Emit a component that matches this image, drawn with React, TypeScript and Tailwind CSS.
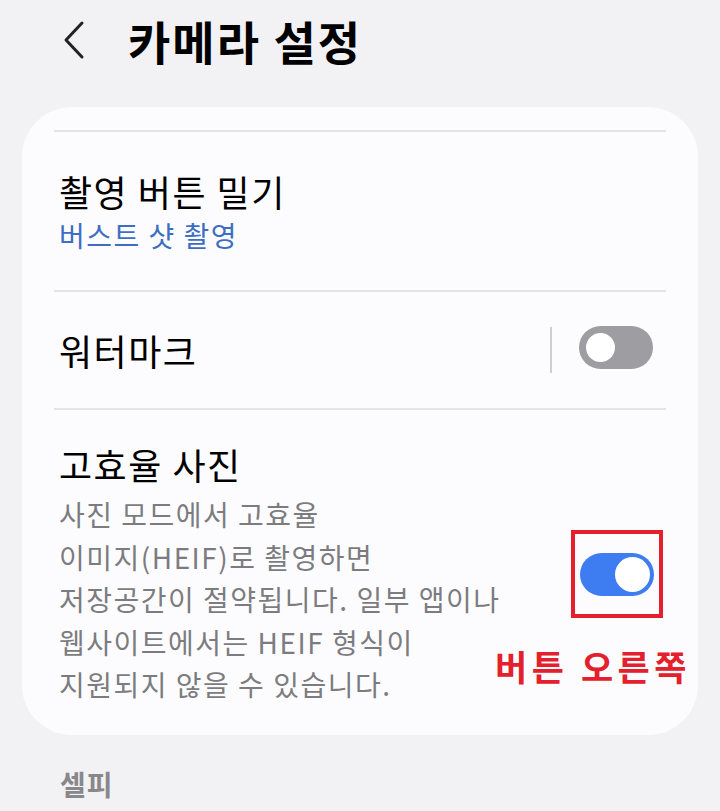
import { useState } from 'react';

const font = { fontFamily: '"Noto Sans CJK KR", "Noto Sans", sans-serif' };

// Samsung-style pill switch
function Toggle({ on, onClick }: { on: boolean; onClick?: () => void }) {
  return (
    <button
      onClick={onClick}
      className={`relative h-[43px] w-[74px] rounded-full ${on ? 'bg-[#3e7cf1]' : 'bg-[#9d9da2]'}`}
    >
      <span
        className={`absolute top-[4px] h-[35px] w-[35px] rounded-full bg-white ${
          on ? 'left-[35px]' : 'left-[4px] border-[3px] border-[#9d9da2]'
        }`}
      />
    </button>
  );
}

export default function App() {
  const [watermark, setWatermark] = useState(false);
  const [heif, setHeif] = useState(true);

  return (
    <div className="min-h-[811px] w-[720px] overflow-hidden bg-[#f2f2f4]" style={font}>
      {/* Header */}
      <div className="flex h-[80px] items-center">
        <svg className="ml-[62px] h-[40px] w-[26px]" viewBox="0 0 26 40" fill="none">
          <path d="M20 3 L4 20 L20 37" stroke="#222" strokeWidth="3" strokeLinecap="round" strokeLinejoin="round" />
        </svg>
        <h1 className="ml-[40px] text-[46px] font-bold leading-none tracking-[2px] text-black">카메라 설정</h1>
      </div>

      {/* Settings card */}
      <div className="mx-[22px] mt-[27px] h-[628px] rounded-[50px] bg-[#fcfcfe] px-[32px] pt-[23px]">
        <div className="h-[2px] bg-[#e4e4e7]" />

        <div className="flex h-[158px] flex-col justify-center pl-[5px]">
          <div className="text-[36px] leading-[48px] tracking-[1.5px] text-black">촬영 버튼 밀기</div>
          <div className="text-[28px] leading-[40px] tracking-[1.5px] text-[#3d6ec3]">버스트 샷 촬영</div>
        </div>

        <div className="h-[2px] bg-[#e4e4e7]" />

        <div className="flex h-[116px] items-center pl-[5px]">
          <div className="flex-1 text-[36px] tracking-[1.5px] text-black">워터마크</div>
          <div className="h-[46px] w-[2px] bg-[#cfcfd3]" />
          <div className="ml-[27px] mr-[13px]">
            <Toggle on={watermark} onClick={() => setWatermark(!watermark)} />
          </div>
        </div>

        <div className="h-[2px] bg-[#e4e4e7]" />

        <div className="relative flex pl-[5px] pt-[28px]">
          <div className="flex-1">
            <div className="text-[36px] leading-[52px] tracking-[1.5px] text-black">고효율 사진</div>
            <div className="mt-[3px] text-[28px] leading-[42.5px] tracking-[1.5px] text-[#7c7c80]">
              사진 모드에서 고효율
              <br />
              이미지(HEIF)로 촬영하면
              <br />
              저장공간이 절약됩니다. 일부 앱이나
              <br />
              웹사이트에서는 HEIF 형식이
              <br />
              지원되지 않을 수 있습니다.
            </div>
          </div>
          <div className="mt-[92px] mr-[3px] flex h-[88px] w-[92px] shrink-0 items-center justify-center self-start border-[4px] border-[#e3202b]">
            <Toggle on={heif} onClick={() => setHeif(!heif)} />
          </div>
          <div className="absolute right-[-25px] top-[230px] text-[35px] font-bold tracking-[4.5px] text-[#e3202b]">
            버튼 오른쪽
          </div>
        </div>
      </div>

      {/* Next section label */}
      <div className="ml-[60px] mt-[28px] text-[28px] font-bold tracking-[1px] text-[#88888c]">셀피</div>
    </div>
  );
}
